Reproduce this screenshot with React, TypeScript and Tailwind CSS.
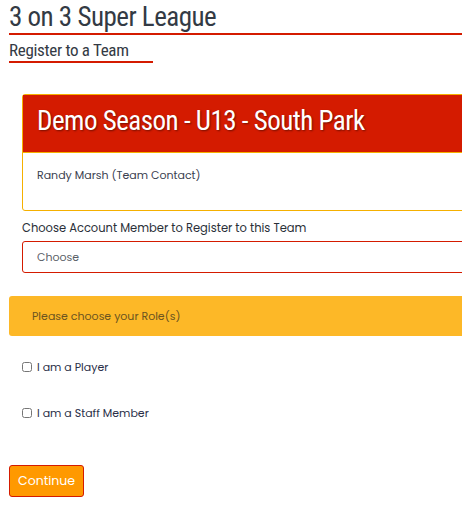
export default function App() {
  const heading = { fontFamily: '"Roboto Condensed", "DejaVu Sans", sans-serif', fontStretch: "condensed" };
  const body = { fontFamily: '"Poppins", "Open Sans", "Lato", sans-serif' };

  return (
    <div className="w-[462px] h-[511px] overflow-hidden bg-white pl-[9px]" style={body}>
      {/* page title */}
      <h1
        className="w-[600px] whitespace-nowrap border-b-2 border-[#d41b00] pt-[2px] pb-[1px] text-[27px] leading-[30px] tracking-[-0.5px] text-[#333a44]"
        style={heading}
      >
        3 on 3 Super League
      </h1>
      <h2
        className="inline-block whitespace-nowrap w-[144px] border-b-2 border-[#d41b00] mt-[6px] pb-[1px] text-[17px] leading-[19px] tracking-[-0.3px] text-[#333a44]"
        style={heading}
      >
        Register to a Team
      </h2>

      {/* team card */}
      <div className="ml-[13px] mt-[31px] w-[560px] rounded-[3px] border border-[#f5b000] bg-white">
        <div className="bg-[#d41b00] border-b border-[#f5b000] h-[58px] flex items-center pl-[14px] pb-[5px]">
          <span
            className="whitespace-nowrap text-white text-[27px] tracking-[-0.5px] leading-none [text-shadow:1px_1px_2px_rgba(0,0,0,0.45)]"
            style={heading}
          >
            Demo Season - U13 - South Park
          </span>
        </div>
        <div className="h-[57px] pl-[14px] pt-[15px] text-[11px] leading-[14px] text-[#3a4150]">
          Randy Marsh (Team Contact)
        </div>
      </div>

      {/* member select */}
      <div className="ml-[13px] mt-[10px]">
        <div className="text-[11.5px] leading-[14px] text-[#2a2f38]">Choose Account Member to Register to this Team</div>
        <div className="mt-[6px] w-[560px] h-[32px] rounded-[3px] border border-[#d41b00] flex items-center pl-[14px]">
          <span className="text-[11px] text-[#5a5f68]">Choose</span>
        </div>
      </div>

      {/* role alert */}
      <div className="mt-[23px] w-[560px] h-[40px] rounded-[3px] bg-[#fdb827] flex items-center pl-[23px]">
        <span className="text-[11px] text-[#6b5420]">Please choose your Role(s)</span>
      </div>

      {/* roles */}
      <div className="ml-[13px] mt-[23px] flex flex-col gap-[29px]">
        <label className="flex items-center gap-[5px] text-[11px] text-[#2a2f48]">
          <input type="checkbox" className="w-[10px] h-[10px] m-0" />
          I am a Player
        </label>
        <label className="flex items-center gap-[5px] text-[11px] text-[#2a2f48]">
          <input type="checkbox" className="w-[10px] h-[10px] m-0" />
          I am a Staff Member
        </label>
      </div>

      <button className="mt-[44px] w-[75px] h-[32px] rounded-[3px] border border-[#d41b00] bg-[#ff9900] text-white text-[12.5px]">
        Continue
      </button>
    </div>
  );
}
